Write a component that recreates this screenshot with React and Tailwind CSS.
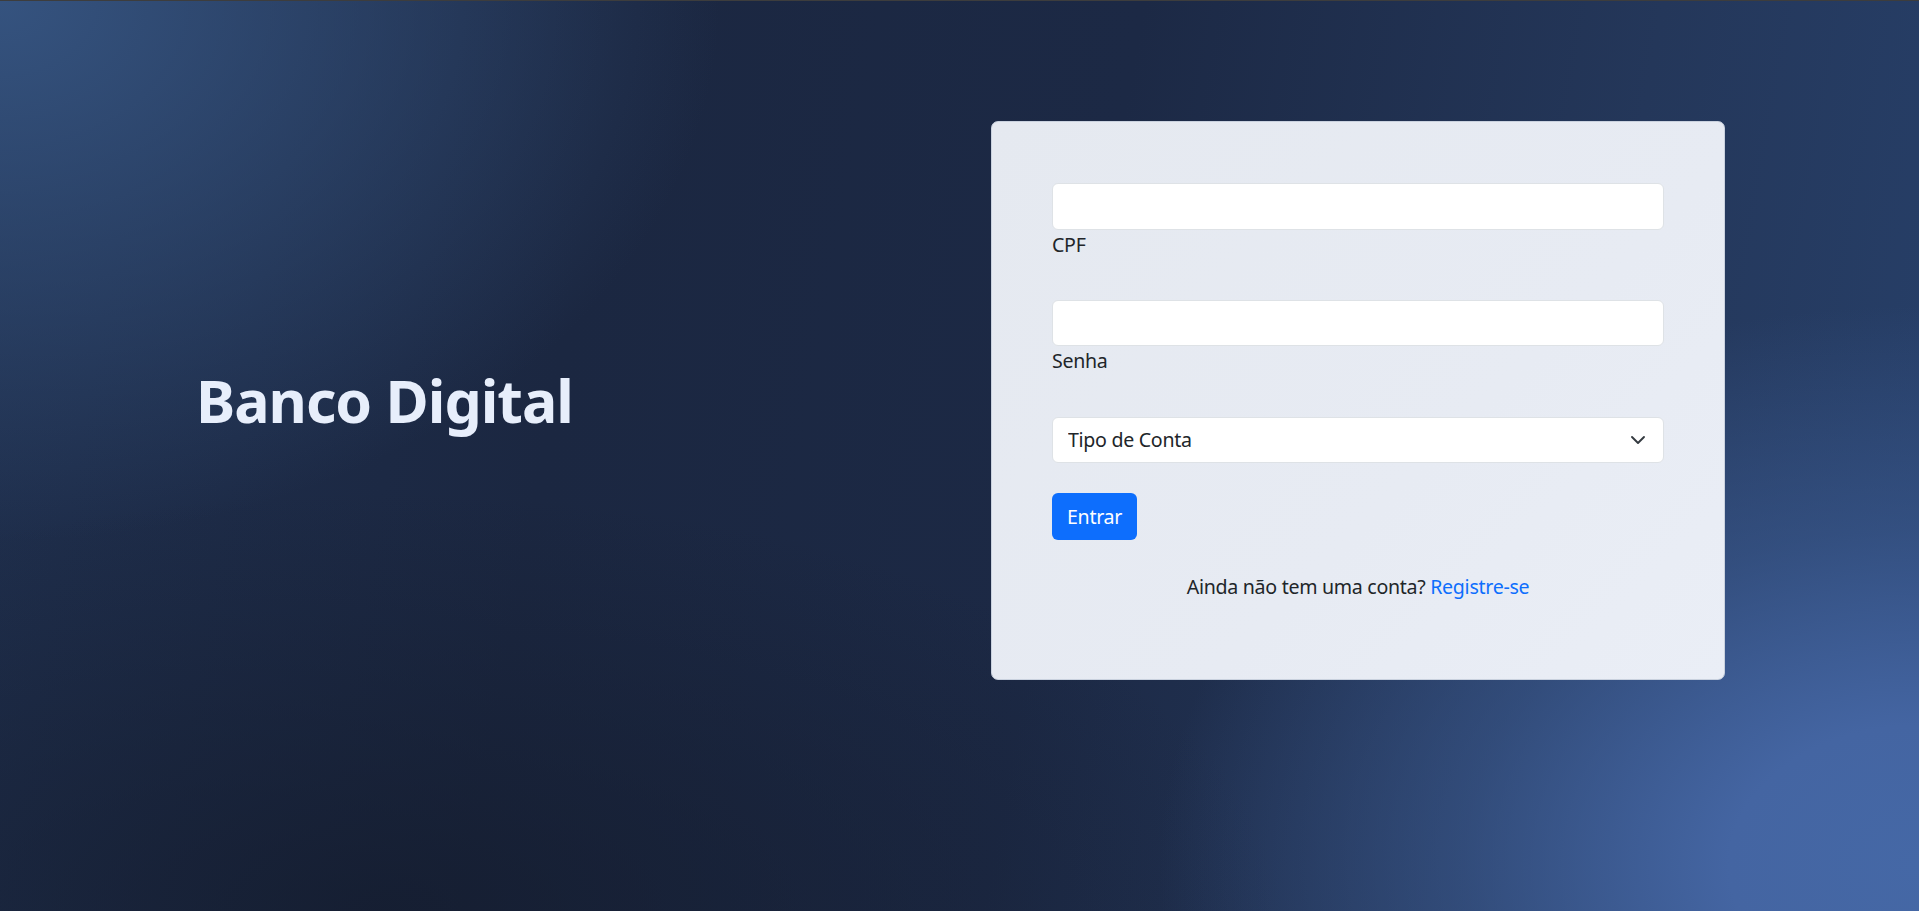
import React, { useState } from "react";

const Login = () => {
  const [cpf, setCpf] = useState("");
  const [senha, setSenha] = useState("");
  const [tipo, setTipo] = useState("");

  return (
    <section className="relative h-screen overflow-hidden border-t border-[#3d3d3d] bg-[linear-gradient(100deg,#1f2f4d_0%,#1b2741_30%,#1c2945_55%,#24375a_80%,#27406a_100%)] font-['Noto_Sans',sans-serif]">
      {/* background lights */}
      <div className="pointer-events-none absolute inset-0 bg-[radial-gradient(720px_540px_at_0%_0%,#35537f_0%,rgba(53,83,127,0.55)_45%,rgba(53,83,127,0)_100%)]" />
      <div className="pointer-events-none absolute inset-0 bg-[radial-gradient(900px_420px_at_20%_100%,rgba(20,28,46,0.8)_0%,rgba(20,28,46,0)_100%)]" />
      <div className="pointer-events-none absolute inset-0 bg-[radial-gradient(760px_560px_at_100%_95%,#4568a6_0%,#4465a2_25%,rgba(62,94,150,0.55)_60%,rgba(62,94,150,0)_100%)]" />

      <div className="relative flex items-center pt-[120px]">
        {/* TITLE */}
        <div className="w-[991px] pl-[196px]">
          <h1 className="text-[59px] leading-[1.2] font-bold text-[#e7eefb] tracking-[-1px]">
            Banco Digital
          </h1>
        </div>

        {/* CARD */}
        <div className="w-[734px] h-[559px] rounded-[7px] border border-[#c9d1de] bg-[linear-gradient(135deg,#e5e9f0_0%,#e7ebf3_60%,#eaeef6_100%)] px-[60px] pt-[61px] text-[19.6px] leading-[1.5] tracking-[-0.3px] text-[#212529]">
          <div className="mb-[41px]">
            <input
              type="text"
              value={cpf}
              onChange={(e) => setCpf(e.target.value)}
              className="block w-full h-[47px] rounded-[6px] border border-[#dee2e6] bg-white px-[15px] outline-none"
            />
            <label className="block">CPF</label>
          </div>

          <div className="mb-[41px]">
            <input
              type="password"
              value={senha}
              onChange={(e) => setSenha(e.target.value)}
              className="block w-full h-[46px] rounded-[6px] border border-[#dee2e6] bg-white px-[15px] outline-none"
            />
            <label className="block">Senha</label>
          </div>

          <div className="relative mb-[30px]">
            <select
              value={tipo}
              onChange={(e) => setTipo(e.target.value)}
              className="block w-full h-[46px] appearance-none rounded-[6px] border border-[#dee2e6] bg-white pl-[15px] pr-[50px] text-[#212529] outline-none"
            >
              <option value="">Tipo de Conta</option>
              <option value="corrente">Conta Corrente</option>
              <option value="poupanca">Conta Poupança</option>
            </select>
            <svg
              className="pointer-events-none absolute right-[18px] top-1/2 -translate-y-1/2"
              width="16"
              height="16"
              viewBox="0 0 16 16"
              fill="none"
              stroke="#343a40"
              strokeWidth="1.9"
              strokeLinecap="round"
              strokeLinejoin="round"
            >
              <path d="m2 5 6 6 6-6" />
            </svg>
          </div>

          <button className="h-[47px] rounded-[6px] bg-[#0d6efd] px-[15px] text-white">
            Entrar
          </button>

          <p className="mt-[32px] text-center">
            Ainda não tem uma conta?{" "}
            <a href="#" className="text-[#0d6efd]">
              Registre-se
            </a>
          </p>
        </div>
      </div>
    </section>
  );
};

export default function App() {
  return <Login />;
}
